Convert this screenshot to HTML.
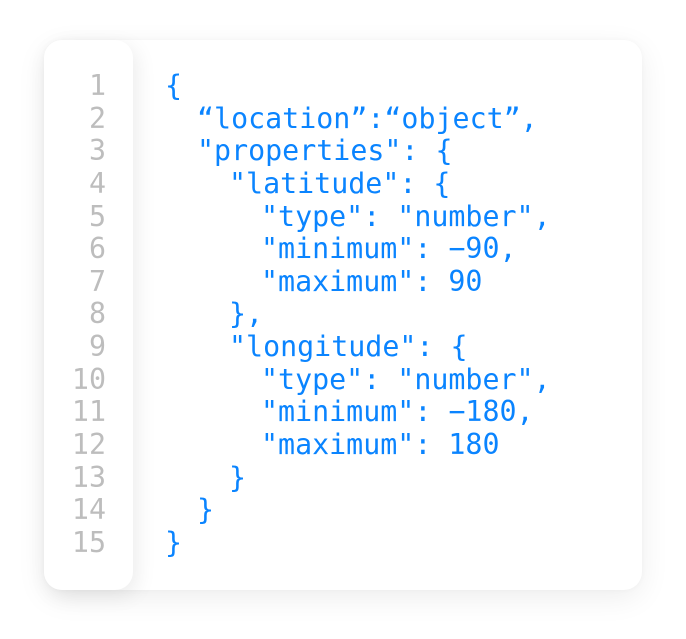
<!DOCTYPE html>
<html><head><style>
html,body{margin:0;padding:0;background:#fff;width:686px;height:639px;overflow:hidden}
.card{position:absolute;left:44px;top:40px;width:598px;height:550px;background:#fff;border-radius:18px;box-shadow:0 8px 30px rgba(0,0,0,0.07),0 0 6px rgba(0,0,0,0.03)}
.gutter{position:absolute;left:44px;top:40px;width:89px;height:550px;background:#fff;border-radius:18px;box-shadow:4px 6px 20px rgba(0,0,0,0.08)}
.f{margin:0;position:absolute;font-family:"DejaVu Sans Mono","Liberation Mono",monospace;font-size:28.3px;line-height:32.64px;white-space:pre}
.nums{left:44px;width:62px;top:70px;text-align:right;color:#bdbdbd}
.code{left:165px;top:70px;color:#0a84ff}
.l1{padding-left:32px}.l2{padding-left:64px}.l3{padding-left:96px}
</style></head><body>
<div class="card"></div>
<div class="gutter"></div>
<div class="f nums">1
2
3
4
5
6
7
8
9
10
11
12
13
14
15</div>
<div class="f code"><div>{</div><div class="l1">“location”:“object”,</div><div class="l1">"properties": {</div><div class="l2">"latitude": {</div><div class="l3">"type": "number",</div><div class="l3">"minimum": −90,</div><div class="l3">"maximum": 90</div><div class="l2">},</div><div class="l2">"longitude": {</div><div class="l3">"type": "number",</div><div class="l3">"minimum": −180,</div><div class="l3">"maximum": 180</div><div class="l2">}</div><div class="l1">}</div><div>}</div></div>
</body></html>
